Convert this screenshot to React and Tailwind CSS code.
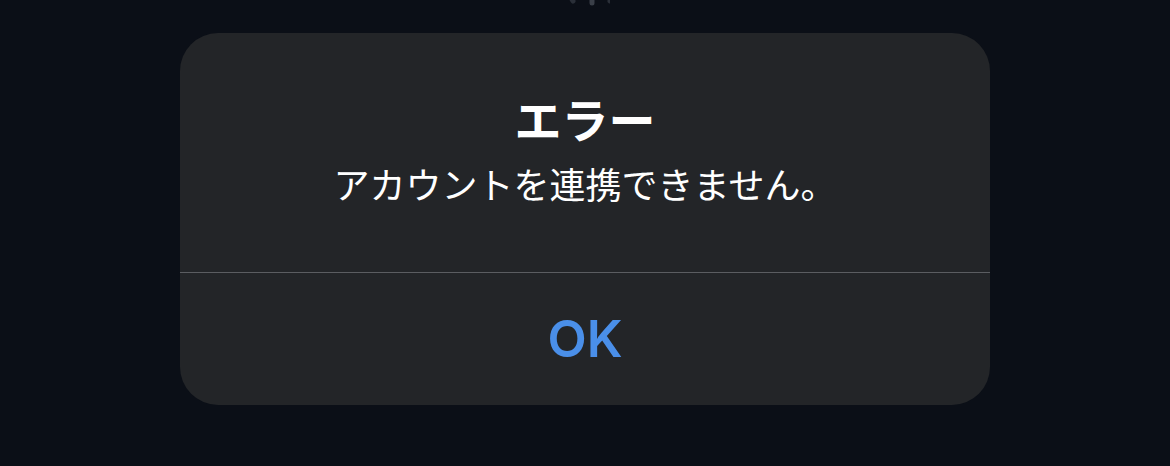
export default function App() {
  return (
    <div className="w-full h-[466px] bg-[#0b0f17] flex flex-col items-center overflow-hidden font-['Noto_Sans_CJK_JP','Noto_Sans',sans-serif]">
      {/* 背後のスピナーの下端 */}
      <svg width="60" height="8" viewBox="0 0 60 8" className="ml-[-10px]">
        <line x1="20" y1="-4" x2="23" y2="1" stroke="#2a2f38" strokeWidth="5" strokeLinecap="round" />
        <line x1="42" y1="-4" x2="42" y2="3" stroke="#3a3f48" strokeWidth="5" strokeLinecap="round" />
        <line x1="63" y1="-4" x2="60" y2="1" stroke="#2a2f38" strokeWidth="5" strokeLinecap="round" />
      </svg>

      <div className="mt-[25px] w-[810px] h-[372px] rounded-[38px] bg-[#232528] flex flex-col">
        <div className="h-[239px] flex flex-col items-center pt-[56px]">
          <div className="text-[47px] leading-[58px] font-bold text-white">エラー</div>
          <div className="text-[36px] leading-[48px] text-white mt-[12px]">アカウントを連携できません。</div>
        </div>
        <div className="h-px bg-[#5b5d61]" />
        <div className="flex-1 flex items-center justify-center pb-[2px]">
          <span className="font-['Inter','Liberation_Sans',sans-serif] font-semibold text-[51px] text-[#4a8fe9] leading-none">
            OK
          </span>
        </div>
      </div>
    </div>
  )
}
